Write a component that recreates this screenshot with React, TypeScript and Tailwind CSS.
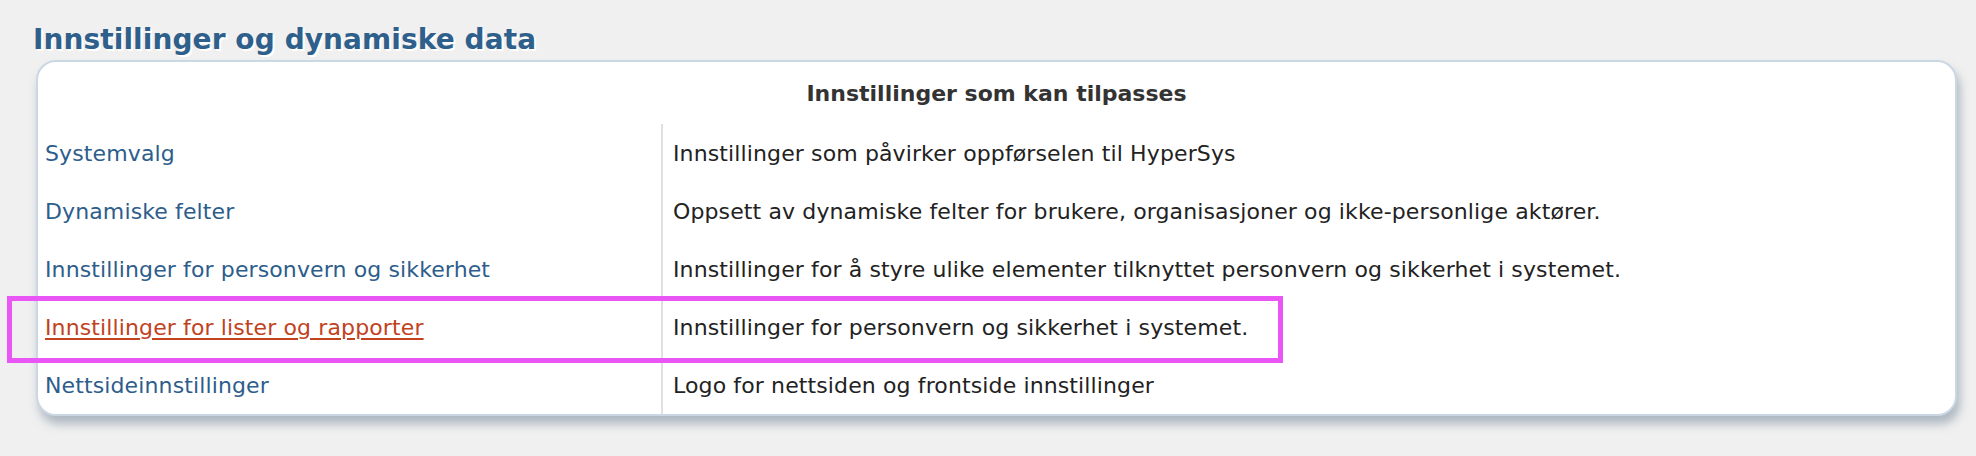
const rows = [
  { name: 'Systemvalg', desc: 'Innstillinger som påvirker oppførselen til HyperSys' },
  { name: 'Dynamiske felter', desc: 'Oppsett av dynamiske felter for brukere, organisasjoner og ikke-personlige aktører.' },
  { name: 'Innstillinger for personvern og sikkerhet', desc: 'Innstillinger for å styre ulike elementer tilknyttet personvern og sikkerhet i systemet.' },
  { name: 'Innstillinger for lister og rapporter', desc: 'Innstillinger for personvern og sikkerhet i systemet.', active: true },
  { name: 'Nettsideinnstillinger', desc: 'Logo for nettsiden og frontside innstillinger' },
]

export default function App() {
  return (
    <div
      className="relative min-h-[456px] w-[1976px] bg-[#f0f0f0] pt-[26px]"
      style={{ fontFamily: '"DejaVu Sans", Verdana, sans-serif' }}
    >
      <h1 className="ml-[33px] text-[28px] font-bold leading-[28px] tracking-[0.08px] text-[#2f5f8b] [text-shadow:2px_2px_0_#ffffff]">
        Innstillinger og dynamiske data
      </h1>

      <div className="ml-[36px] mt-[6px] w-[1921px] overflow-hidden rounded-[20px] border-2 border-[#cbd8e3] bg-white shadow-[3px_8px_10px_rgba(110,130,150,0.5)]">
        <div className="flex h-[62px] items-center justify-center text-[22px] font-bold text-[#333333]">
          Innstillinger som kan tilpasses
        </div>
        {rows.map((r) => (
          <div key={r.name} className="flex h-[58px] text-[22px] tracking-[0.12px]">
            <div className="flex w-[623px] items-center pl-[7px]">
              <a
                href="#"
                className={r.active ? 'text-[#c1421d] underline underline-offset-[3px]' : 'text-[#2d5d8b]'}
              >
                {r.name}
              </a>
            </div>
            <div className="flex flex-1 items-center border-l-2 border-[#e0e0e0] pl-[10px] text-[#222222]">
              {r.desc}
            </div>
          </div>
        ))}
      </div>

      <div className="pointer-events-none absolute left-[7px] top-[296px] h-[67px] w-[1276px] border-[5px] border-[#ea55f5]" />
    </div>
  )
}
